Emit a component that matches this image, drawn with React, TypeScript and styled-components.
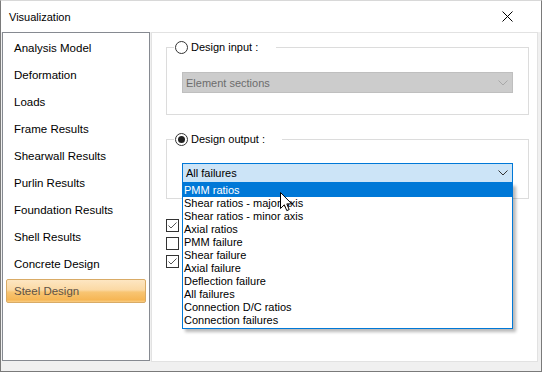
import React from "react";
import styled, { createGlobalStyle } from "styled-components";

const GlobalStyle = createGlobalStyle`
  html, body {
    margin: 0;
    padding: 0;
    background: #ffffff;
  }
  body {
    font-family: "Liberation Sans", Arial, sans-serif;
    font-size: 11px;
    color: #000;
  }
`;

const navItems = [
  "Analysis Model",
  "Deformation",
  "Loads",
  "Frame Results",
  "Shearwall Results",
  "Purlin Results",
  "Foundation Results",
  "Shell Results",
  "Concrete Design",
  "Steel Design",
];

const outputOptions = [
  "PMM ratios",
  "Shear ratios - major axis",
  "Shear ratios - minor axis",
  "Axial ratios",
  "PMM failure",
  "Shear failure",
  "Axial failure",
  "Deflection failure",
  "All failures",
  "Connection D/C ratios",
  "Connection failures",
];

function Chevron({ color }: { color: string }) {
  return (
    <svg width="10" height="6" viewBox="0 0 10 6">
      <polyline points="0.5,0.5 5,5 9.5,0.5" fill="none" stroke={color} strokeWidth="1" />
    </svg>
  );
}

function CheckMark() {
  return (
    <svg width="11" height="11" viewBox="0 0 11 11">
      <polyline points="1.5,5.5 4,8 9.5,2.5" fill="none" stroke="#555" strokeWidth="1" />
    </svg>
  );
}

function Pointer() {
  return (
    <svg width="13" height="20" viewBox="0 0 13 20">
      <path
        d="M0.5 0.5 L0.5 16.5 L4.3 12.8 L6.8 18.6 L9.2 17.6 L6.8 11.9 L11.8 11.9 Z"
        fill="#fff"
        stroke="#000"
        strokeWidth="1"
        strokeLinejoin="miter"
      />
    </svg>
  );
}

export default function App() {
  return (
    <>
      <GlobalStyle />
      <Window>
        <TitleBar>
          <Title>Visualization</Title>
          <CloseIcon viewBox="0 0 11 11">
            <path d="M0.5 0.5 L10.5 10.5 M10.5 0.5 L0.5 10.5" stroke="#000" strokeWidth="1" />
          </CloseIcon>
        </TitleBar>

        <Body>
          <Sidebar>
            {navItems.map(item => (
              <NavItem key={item} $active={item === "Steel Design"}>
                {item}
              </NavItem>
            ))}
          </Sidebar>

          <Content>
            <GroupBox>
              <Caption>
                <Radio />
                <span>Design input :</span>
              </Caption>
              <GroupBody $top={17} $bottom={21}>
                <Combo $disabled>
                  <span>Element sections</span>
                  <Chevron color="#a8a8a8" />
                </Combo>
              </GroupBody>
            </GroupBox>

            <GroupBox $spaced>
              <Caption $wide>
                <Radio $checked />
                <span>Design output :</span>
              </Caption>
              <GroupBody $top={16} $bottom={15}>
                <ComboWrap>
                  <Combo>
                    <span>All failures</span>
                    <Chevron color="#333" />
                  </Combo>
                  <DropList>
                    {outputOptions.map((opt, i) => (
                      <DropItem key={opt} $selected={i === 0}>
                        {opt}
                      </DropItem>
                    ))}
                  </DropList>
                </ComboWrap>
              </GroupBody>
            </GroupBox>

            <Checks>
              <CheckBox>
                <CheckMark />
              </CheckBox>
              <CheckBox />
              <CheckBox>
                <CheckMark />
              </CheckBox>
            </Checks>
          </Content>
        </Body>

        <Cursor>
          <Pointer />
        </Cursor>
      </Window>
    </>
  );
}

const Window = styled.div`
  position: relative;
  width: 542px;
  height: 372px;
  box-sizing: border-box;
  border: 1px solid #7a7a7a;
  border-top-color: #d8d8d8;
  background: #f0f0f0;
  display: flex;
  flex-direction: column;
  overflow: hidden;
`;

const TitleBar = styled.div`
  height: 31px;
  flex: none;
  background: #fff;
  display: flex;
  align-items: center;
  justify-content: space-between;
  padding-left: 8px;
`;

const Title = styled.span`
  font-size: 11px;
  color: #000;
`;

const CloseIcon = styled.svg`
  width: 11px;
  height: 11px;
  margin-right: 28px;
`;

const Body = styled.div`
  flex: 1;
  display: flex;
  gap: 1px;
  padding: 0 3px 9px 1px;
  min-height: 0;
`;

const Sidebar = styled.div`
  width: 148px;
  flex: none;
  box-sizing: border-box;
  border: 1px solid #868a91;
  background: #fff;
  padding-top: 3px;
  display: flex;
  flex-direction: column;
  margin-bottom: 1px;
`;

const NavItem = styled.div<{ $active?: boolean }>`
  height: 24px;
  box-sizing: border-box;
  margin: 0 3px 3px;
  padding-left: 7px;
  display: flex;
  align-items: center;
  font-size: 11.5px;
  border: 1px solid ${p => (p.$active ? "#d9ab66" : "transparent")};
  border-radius: 2px;
  color: ${p => (p.$active ? "#5e5246" : "#000")};
  background: ${p =>
    p.$active
      ? "linear-gradient(to bottom, #fde6c2 0%, #fbd9a4 45%, #f8c573 55%, #f6b655 90%, #f9cd85 100%)"
      : "transparent"};
`;

const Content = styled.div`
  flex: 1;
  box-sizing: border-box;
  background: #fff;
  border: 1px solid #e2e2e2;
  padding: 6px 8px 0 14px;
  display: flex;
  flex-direction: column;
`;

const GroupBox = styled.fieldset<{ $spaced?: boolean }>`
  margin: ${p => (p.$spaced ? "16px" : "0")} 0 0;
  padding: 0;
  min-width: 0;
  border: 1px solid #dcdcdc;
`;

const Caption = styled.legend<{ $wide?: boolean }>`
  margin-left: 7px;
  padding: 0 ${p => (p.$wide ? "17px" : "18px")} 0 1px;
  height: 16px;
  display: flex;
  align-items: center;
  gap: 3px;
  font-size: 11px;
`;

const Radio = styled.span<{ $checked?: boolean }>`
  width: 13px;
  height: 13px;
  box-sizing: border-box;
  border-radius: 50%;
  border: 1px solid #333;
  background: #fff;
  display: flex;
  align-items: center;
  justify-content: center;

  &::after {
    content: "";
    width: 7px;
    height: 7px;
    border-radius: 50%;
    background: ${p => (p.$checked ? "#222" : "transparent")};
  }
`;

const GroupBody = styled.div<{ $top: number; $bottom: number }>`
  padding: ${p => p.$top}px 15px ${p => p.$bottom}px;
`;

const ComboWrap = styled.div`
  position: relative;
`;

const Combo = styled.div<{ $disabled?: boolean }>`
  height: ${p => (p.$disabled ? "21px" : "20px")};
  box-sizing: border-box;
  display: flex;
  align-items: center;
  justify-content: space-between;
  padding: 0 4px 0 3px;
  font-size: 11px;
  border: 1px solid ${p => (p.$disabled ? "#bfbfbf" : "#0078d7")};
  background: ${p => (p.$disabled ? "#cccccc" : "#cce4f7")};
  color: ${p => (p.$disabled ? "#6d6d6d" : "#000")};
`;

const DropList = styled.div`
  position: absolute;
  top: 100%;
  left: 0;
  right: 0;
  z-index: 5;
  box-sizing: border-box;
  border: 1px solid #0078d7;
  background: #fff;
  padding-bottom: 1px;
  box-shadow: 3px 3px 3px rgba(0, 0, 0, 0.28);
`;

const DropItem = styled.div<{ $selected?: boolean }>`
  height: 13px;
  line-height: 13px;
  padding-left: 1px;
  font-size: 11px;
  white-space: nowrap;
  background: ${p => (p.$selected ? "#0078d7" : "transparent")};
  color: ${p => (p.$selected ? "#fff" : "#000")};
`;

const Checks = styled.div`
  margin-top: 20px;
  display: flex;
  flex-direction: column;
  gap: 5px;
`;

const CheckBox = styled.span`
  width: 13px;
  height: 13px;
  box-sizing: border-box;
  border: 1px solid #333;
  background: #fff;
  display: flex;
  align-items: center;
  justify-content: center;
`;

const Cursor = styled.div`
  position: absolute;
  left: 279px;
  top: 191px;
  z-index: 10;
  line-height: 0;
`;
